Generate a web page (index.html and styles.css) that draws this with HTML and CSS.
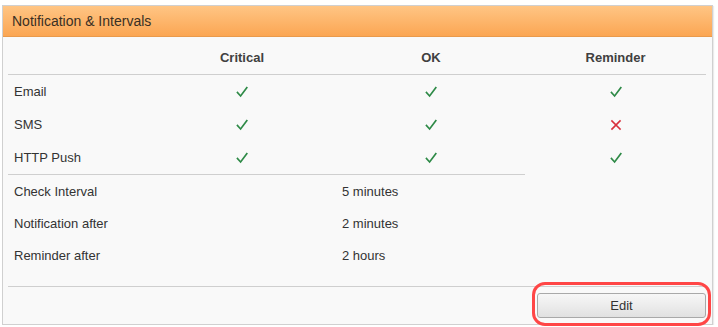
FILE: index.html
```html
<!DOCTYPE html>
<html>
<head>
<meta charset="utf-8">
<link rel="stylesheet" href="styles.css">
</head>
<body>
<section class="panel">
  <header class="panel-head">Notification &amp; Intervals</header>
  <div class="panel-body">
    <div class="matrix">
      <div class="cell head"></div>
      <div class="cell head center">Critical</div>
      <div class="cell head center">OK</div>
      <div class="cell head center">Reminder</div>

      <div class="cell label">Email</div>
      <div class="cell center"><svg class="ok" viewBox="0 0 12 12"><path d="M1.5 6.5 L4.6 10 L10.8 1.6"/></svg></div>
      <div class="cell center"><svg class="ok" viewBox="0 0 12 12"><path d="M1.5 6.5 L4.6 10 L10.8 1.6"/></svg></div>
      <div class="cell center"><svg class="ok" viewBox="0 0 12 12"><path d="M1.5 6.5 L4.6 10 L10.8 1.6"/></svg></div>

      <div class="cell label">SMS</div>
      <div class="cell center"><svg class="ok" viewBox="0 0 12 12"><path d="M1.5 6.5 L4.6 10 L10.8 1.6"/></svg></div>
      <div class="cell center"><svg class="ok" viewBox="0 0 12 12"><path d="M1.5 6.5 L4.6 10 L10.8 1.6"/></svg></div>
      <div class="cell center"><svg class="no" viewBox="0 0 12 12"><path d="M2 2 L10 10 M10 2 L2 10"/></svg></div>

      <div class="cell label">HTTP Push</div>
      <div class="cell center"><svg class="ok" viewBox="0 0 12 12"><path d="M1.5 6.5 L4.6 10 L10.8 1.6"/></svg></div>
      <div class="cell center"><svg class="ok" viewBox="0 0 12 12"><path d="M1.5 6.5 L4.6 10 L10.8 1.6"/></svg></div>
      <div class="cell center"><svg class="ok" viewBox="0 0 12 12"><path d="M1.5 6.5 L4.6 10 L10.8 1.6"/></svg></div>
    </div>
    <div class="intervals">
      <div class="irow"><span class="ilabel">Check Interval</span><span class="ival">5 minutes</span></div>
      <div class="irow"><span class="ilabel">Notification after</span><span class="ival">2 minutes</span></div>
      <div class="irow"><span class="ilabel">Reminder after</span><span class="ival">2 hours</span></div>
    </div>
  </div>
  <footer class="panel-foot">
    <button class="btn">Edit</button>
  </footer>
</section>
<div class="annot"></div>
</body>
</html>
```
FILE: styles.css
```css
html, body {
  margin: 0;
  padding: 0;
  background: #ffffff;
}
body {
  font-family: "Liberation Sans", Arial, sans-serif;
  font-size: 13px;
  color: #333333;
}
.panel {
  margin: 5px 0 0 2px;
  width: 709px;
  border: 1px solid #d0d0d0;
  background: #f9f9f9;
  box-shadow: 1px 1px 1px rgba(0,0,0,0.08);
}
.panel-head {
  height: 31px;
  box-sizing: border-box;
  padding: 0 9px;
  display: flex;
  align-items: center;
  font-size: 14px;
  color: #3a3024;
  background: linear-gradient(#ffc584, #fba653);
  border-bottom: 1px solid #e99a4c;
}
.panel-body {
  padding: 0 6px 0 5px;
}
.matrix {
  display: grid;
  grid-template-columns: 139px 190px 188px 1fr;
  grid-template-rows: 38px 33px 33px 33px;
}
.cell {
  display: flex;
  align-items: center;
  padding-left: 6px;
}
.cell.center {
  justify-content: center;
  padding-left: 0;
}
.cell.head {
  border-bottom: 1px solid #cfcfcf;
  padding-top: 3px;
  font-weight: bold;
  color: #404040;
}
.ok, .no {
  width: 12px;
  height: 12px;
  fill: none;
  stroke-linecap: square;
}
.ok { stroke: #2e8a47; stroke-width: 1.7; }
.no { stroke: #d8303c; stroke-width: 1.7; }
.intervals {
  width: 517px;
  border-top: 1px solid #cfcfcf;
  padding-bottom: 15px;
}
.irow {
  display: flex;
  height: 32px;
  align-items: center;
}
.ilabel {
  width: 329px;
  padding-left: 6px;
  box-sizing: border-box;
}
.ival {
  padding-left: 5px;
}
.panel-foot {
  margin: 0 6px 0 5px;
  border-top: 1px solid #cfcfcf;
  padding: 6px 0 6px;
  display: flex;
  justify-content: flex-end;
}
.btn {
  width: 169px;
  height: 25px;
  font-family: "Liberation Sans", Arial, sans-serif;
  font-size: 13px;
  color: #333;
  background: linear-gradient(#f7f7f7, #e1e1e1);
  border: 1px solid #a9a9a9;
  border-radius: 3px;
  padding: 0;
}
.annot {
  position: absolute;
  left: 532px;
  top: 282px;
  width: 173px;
  height: 38px;
  border: 3px solid #ff4646;
  border-radius: 13px;
}
```
